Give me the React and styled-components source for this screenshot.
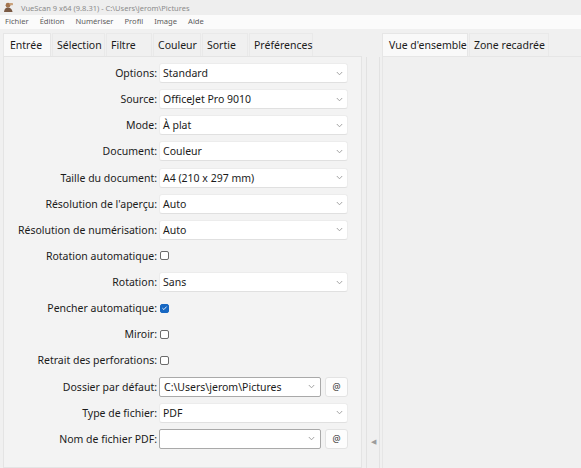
import styled, { createGlobalStyle } from "styled-components";

const GlobalStyle = createGlobalStyle`
  html, body {
    margin: 0;
    padding: 0;
    background: #f0f0f0;
  }
  * {
    box-sizing: border-box;
  }
`;

const rows = [
  { label: "Options:", type: "select", value: "Standard" },
  { label: "Source:", type: "select", value: "OfficeJet Pro 9010" },
  { label: "Mode:", type: "select", value: "À plat" },
  { label: "Document:", type: "select", value: "Couleur" },
  { label: "Taille du document:", type: "select", value: "A4 (210 x 297 mm)" },
  { label: "Résolution de l'aperçu:", type: "select", value: "Auto" },
  { label: "Résolution de numérisation:", type: "select", value: "Auto" },
  { label: "Rotation automatique:", type: "check", checked: false },
  { label: "Rotation:", type: "select", value: "Sans" },
  { label: "Pencher automatique:", type: "check", checked: true },
  { label: "Miroir:", type: "check", checked: false },
  { label: "Retrait des perforations:", type: "check", checked: false },
  { label: "Dossier par défaut:", type: "combo", value: "C:\\Users\\jerom\\Pictures" },
  { label: "Type de fichier:", type: "select", value: "PDF" },
  { label: "Nom de fichier PDF:", type: "combo", value: "" },
];

const leftTabs = [
  { name: "Entrée", width: 48, active: true },
  { name: "Sélection", width: 53 },
  { name: "Filtre", width: 46 },
  { name: "Couleur", width: 48 },
  { name: "Sortie", width: 46 },
  { name: "Préférences", width: 64 },
];

const Chevron = () => (
  <svg width="7" height="5" viewBox="0 0 7 5">
    <path d="M0.8 1 L3.5 3.8 L6.2 1" fill="none" stroke="#9a9a9a" strokeWidth="0.9" />
  </svg>
);

const AppIcon = () => (
  <svg width="11" height="11" viewBox="0 0 11 11">
    <circle cx="5" cy="3.2" r="2.4" fill="#a3744e" />
    <path d="M1 10 C1.5 6.5 3 5.6 5 5.6 C7 5.6 8.8 6.6 9.6 10 Z" fill="#7a5a44" />
    <rect x="6.5" y="1" width="3.5" height="2.2" rx="0.6" fill="#c9a27c" />
  </svg>
);

export default function App() {
  return (
    <>
      <GlobalStyle />
      <Window>
        <TitleBar>
          <AppIcon />
          <span>VueScan 9 x64 (9.8.31) - C:\Users\jerom\Pictures</span>
        </TitleBar>
        <MenuBar>
          {["Fichier", "Édition", "Numériser", "Profil", "Image", "Aide"].map((m) => (
            <MenuItem key={m}>{m}</MenuItem>
          ))}
        </MenuBar>
        <Main>
          <LeftPane>
            <TabBar>
              {leftTabs.map((t) => (
                <Tab key={t.name} $active={t.active} $width={t.width}>
                  {t.name}
                </Tab>
              ))}
            </TabBar>
            <TabPanel>
              {rows.map((r) => (
                <Row key={r.label}>
                  <Label>{r.label}</Label>
                  {r.type === "select" && (
                    <Select>
                      <span>{r.value}</span>
                      <Chevron />
                    </Select>
                  )}
                  {r.type === "check" && (
                    <CheckCell>
                      <Checkbox $checked={r.checked}>
                        {r.checked && (
                          <svg width="8" height="8" viewBox="0 0 8 8">
                            <path d="M1.6 4.2 L3.3 5.8 L6.4 2.4" fill="none" stroke="#fff" strokeWidth="1" />
                          </svg>
                        )}
                      </Checkbox>
                    </CheckCell>
                  )}
                  {r.type === "combo" && (
                    <ComboCell>
                      <Combo>
                        <span>{r.value}</span>
                        <Chevron />
                      </Combo>
                      <AtButton>@</AtButton>
                    </ComboCell>
                  )}
                </Row>
              ))}
            </TabPanel>
          </LeftPane>
          <Splitter>
            <Arrow>◀</Arrow>
          </Splitter>
          <RightPane>
            <TabBar>
              <Tab $active $width={86}>Vue d'ensemble</Tab>
              <Tab $width={80}>Zone recadrée</Tab>
            </TabBar>
            <PreviewPanel />
          </RightPane>
        </Main>
      </Window>
    </>
  );
}

const Window = styled.div`
  width: 581px;
  height: 468px;
  display: flex;
  flex-direction: column;
  overflow: hidden;
  font-family: "Noto Sans", "Open Sans", sans-serif;
  color: #1b1b1b;
  background: #f0f0f0;
`;

const TitleBar = styled.div`
  height: 15px;
  display: flex;
  align-items: center;
  gap: 7px;
  padding-left: 3px;
  font-size: 7.5px;
  color: #8b8b8b;
  background: #eeeeee;
`;

const MenuBar = styled.div`
  height: 14px;
  display: flex;
  align-items: center;
  gap: 11px;
  padding-left: 5px;
  font-size: 7.6px;
  color: #5c5c5c;
  background: #fbfbfb;
`;

const MenuItem = styled.span`
  line-height: 1;
`;

const Main = styled.div`
  flex: 1;
  display: flex;
  padding-top: 3px;
  min-height: 0;
`;

const LeftPane = styled.div`
  width: 362px;
  padding-left: 3px;
  display: flex;
  flex-direction: column;
`;

const TabBar = styled.div`
  height: 24px;
  display: flex;
  align-items: stretch;
  padding-top: 1px;
`;

const Tab = styled.div`
  width: ${(p) => p.$width}px;
  display: flex;
  align-items: center;
  padding-left: ${(p) => (p.$active ? 6 : 4)}px;
  font-size: 10.5px;
  color: #1b1b1b;
  background: ${(p) => (p.$active ? "#f9f9f9" : "#f0f0f0")};
  border: 1px solid ${(p) => (p.$active ? "#e6e6e6" : "#e9e9e9")};
  border-bottom: none;
  margin-right: 1px;
  white-space: nowrap;
`;

const TabPanel = styled.div`
  flex: 1;
  display: grid;
  grid-auto-rows: 20px;
  row-gap: 6.14px;
  align-content: start;
  padding-top: 6px;
  background: #f3f3f3;
  border: 1px solid #e4e4e4;
`;

const Row = styled.div`
  display: grid;
  grid-template-columns: 153px 189px;
  column-gap: 2px;
  align-items: center;
`;

const Label = styled.div`
  text-align: right;
  font-size: 10.5px;
  white-space: nowrap;
  color: #1b1b1b;
`;

const Select = styled.div`
  height: 20px;
  display: flex;
  align-items: center;
  justify-content: space-between;
  padding: 0 4px 0 3px;
  font-size: 10.5px;
  background: #ffffff;
  border: 1px solid #ececec;
  border-bottom-color: #e0e0e0;
  border-radius: 3px;
`;

const CheckCell = styled.div`
  display: flex;
  align-items: center;
  padding-left: 1px;
`;

const Checkbox = styled.div`
  width: 9px;
  height: 9px;
  display: flex;
  align-items: center;
  justify-content: center;
  border-radius: 2px;
  border: 1px solid ${(p) => (p.$checked ? "#1767c2" : "#6b6b6b")};
  background: ${(p) => (p.$checked ? "#1767c2" : "#ffffff")};
`;

const ComboCell = styled.div`
  display: flex;
  align-items: center;
  gap: 4px;
`;

const Combo = styled.div`
  width: 162px;
  height: 20px;
  display: flex;
  align-items: center;
  justify-content: space-between;
  padding: 0 5px 0 4px;
  font-size: 10.5px;
  background: #ffffff;
  border: 1px solid #a9a9a9;
  border-radius: 2px;
`;

const AtButton = styled.div`
  width: 23px;
  height: 20px;
  display: flex;
  align-items: center;
  justify-content: center;
  font-size: 9px;
  color: #333;
  background: #fdfdfd;
  border: 1px solid #e3e3e3;
  border-radius: 3px;
`;

const Splitter = styled.div`
  width: 14px;
  margin-top: 25px;
  display: flex;
  align-items: flex-end;
  justify-content: center;
  padding-bottom: 23px;
  border-left: 1px solid #e2e2e2;
  border-right: 1px solid #e2e2e2;
  margin-left: 4px;
  margin-right: 2px;
`;

const Arrow = styled.span`
  font-size: 7px;
  color: #9c9c9c;
  line-height: 1;
`;

const RightPane = styled.div`
  flex: 1;
  display: flex;
  flex-direction: column;
`;

const PreviewPanel = styled.div`
  flex: 1;
  background: #f0f0f0;
  border-left: 1px solid #e6e6e6;
  border-top: 1px solid #e6e6e6;
`;
